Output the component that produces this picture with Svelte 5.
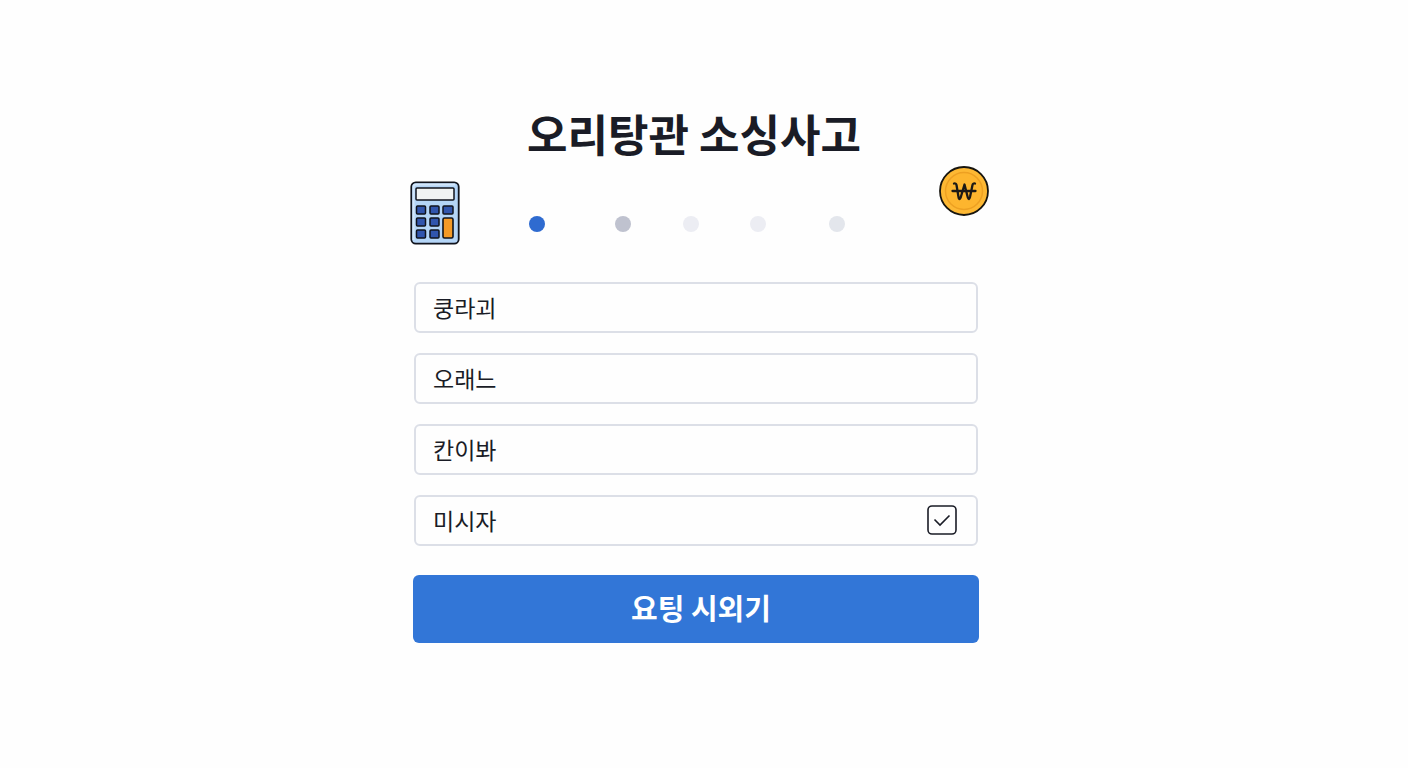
<script lang="ts">
  const steps = ['active', 'next', 'later', 'later', 'last'];

  let product = $state('쿵라괴');
  let origin = $state('오래느');
  let amount = $state('칸이봐');
  let option = $state('미시자');
  let confirmed = $state(true);
</script>

<main class="page">
  <form class="form" onsubmit={(event) => event.preventDefault()}>
    <h1>오리탕관 소싱사고</h1>

    <div class="progress">
      <svg class="calculator" viewBox="0 0 50 64" aria-hidden="true">
        <rect x="1.3" y="1.3" width="47.4" height="61.4" rx="4.5" fill="#b4d5f7" stroke="#10131c" stroke-width="1.8" />
        <path d="M3.5 59V6q0-2.500 2.500-2.500h39" fill="none" stroke="#d3e7fb" stroke-width="2" />
        <rect x="6" y="7" width="38" height="12" rx="1" fill="#f1f3f3" stroke="#10131c" stroke-width="1.5" />
        <g fill="#3155ad" stroke="#10131c" stroke-width="1.5">
          <rect x="6.500" y="25" width="9" height="8" rx="1" />
          <rect x="20" y="25" width="9" height="8" rx="1" />
          <rect x="33" y="25" width="10" height="8" rx="1" />
          <rect x="6.500" y="37" width="9" height="8" rx="1" />
          <rect x="20" y="37" width="9" height="8" rx="1" />
          <rect x="6.500" y="49" width="9" height="8" rx="1" />
          <rect x="20" y="49" width="9" height="8" rx="1" />
        </g>
        <rect x="33" y="37" width="10" height="20" rx="1.5" fill="#f49a27" stroke="#10131c" stroke-width="1.6" />
      </svg>

      <ol class="steps">
        {#each steps as step}
          <li class={step}></li>
        {/each}
      </ol>

      <svg class="coin" viewBox="0 0 50 50" aria-hidden="true">
        <circle cx="25" cy="25" r="24" fill="#fdb833" stroke="#17150f" stroke-width="1.8" />
        <circle cx="25" cy="25" r="18.5" fill="#fdb52e" stroke="#eda022" stroke-width="1.5" />
        <path
          d="M15 17.5q2-.5 2.5 1.500l2 12q.5 4 2.200.5l3.800-13 3.300 13q1.200 3.500 2.200-.5l2.500-12q.5-2 2.500-1.500M13.500 25h23"
          fill="none"
          stroke="#1b1916"
          stroke-width="2.300"
          stroke-linecap="round"
          stroke-linejoin="round"
        />
      </svg>
    </div>

    <div class="fields">
      <input class="field" type="text" aria-label="쿵라괴" bind:value={product} />
      <input class="field" type="text" aria-label="오래느" bind:value={origin} />
      <input class="field" type="text" aria-label="칸이봐" bind:value={amount} />
      <div class="field with-check">
        <input class="text" type="text" aria-label="미시자" bind:value={option} />
        <label class="check">
          <input type="checkbox" aria-label="미시자" bind:checked={confirmed} />
          <svg viewBox="0 0 30 30" aria-hidden="true">
            <rect x="1" y="1" width="28" height="28" rx="4" />
            {#if confirmed}
              <path d="M7.5 14.5l5.500 5.500L22.5 10.5" />
            {/if}
          </svg>
        </label>
      </div>
    </div>

    <button type="submit">요팅 시외기</button>
  </form>
</main>

<style>
  :global(body) {
    margin: 0;
    background: #fefefe;
  }

  .page {
    display: flex;
    justify-content: center;
    padding: 102px 24px 48px 8px;
    color: #1a1c26;
    font-family: 'Noto Sans CJK KR', 'Noto Sans', sans-serif;
  }

  .form {
    width: 100%;
    max-width: 566px;
  }

  h1 {
    margin: 0 0 2px;
    padding-right: 4px;
    font-size: 44px;
    font-weight: 700;
    line-height: 62px;
    text-align: center;
  }

  .progress {
    display: flex;
    justify-content: space-between;
    height: 80px;
    margin: 0 -10px 0 -3px;
  }

  .calculator {
    width: 50px;
    height: 64px;
    margin-top: 15px;
  }

  .coin {
    width: 50px;
    height: 50px;
  }

  .steps {
    display: grid;
    flex: 1;
    grid-template-columns: 86fr 68fr 67fr 79fr 16px;
    align-items: center;
    height: 16px;
    margin: 50px 94px 0 69px;
    padding: 0;
    list-style: none;
  }

  .steps li {
    width: 16px;
    height: 16px;
    border-radius: 50%;
    background: #ecedf3;
  }

  .steps .active {
    background: #2f6bd0;
  }

  .steps .next {
    background: #bfc2cf;
  }

  .steps .last {
    background: #e3e6ec;
  }

  .fields {
    display: grid;
    gap: 20px;
    margin: 36px 1px 29px;
  }

  .field {
    box-sizing: border-box;
    width: 100%;
    height: 51px;
    padding: 0 19px 2px 17px;
    border: 2px solid #dcdfe7;
    border-radius: 6px;
    background: #fefefe;
    color: inherit;
    font-family: inherit;
    font-size: 23px;
  }

  .with-check {
    display: flex;
    align-items: center;
    gap: 16px;
  }

  .text {
    flex: 1;
    min-width: 0;
    padding: 0;
    border: 0;
    background: none;
    color: inherit;
    font: inherit;
  }

  .check {
    position: relative;
    width: 30px;
    height: 30px;
  }

  .check input {
    position: absolute;
    inset: 0;
    width: 100%;
    height: 100%;
    margin: 0;
    opacity: 0;
  }

  .check svg {
    display: block;
    fill: none;
    stroke: #1a1c26;
    stroke-width: 1.6;
  }

  button {
    width: 100%;
    height: 68px;
    padding: 0 0 4px 10px;
    border: 0;
    border-radius: 6px;
    background: #3276d7;
    color: #fff;
    font-family: inherit;
    font-size: 29px;
    font-weight: 700;
  }
</style>
